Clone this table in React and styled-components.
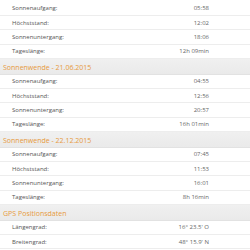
import React from 'react';
import styled, { createGlobalStyle } from 'styled-components';

const Global = createGlobalStyle`
  html, body {
    margin: 0;
    padding: 0;
    background: #ffffff;
    overflow: hidden;
  }
  body {
    font-family: "Open Sans", "Liberation Sans", sans-serif;
  }
`;

const Page = styled.div`
  width: 250px;
  height: 250px;
  overflow: hidden;
  background: #fff;
  padding-top: 1.5px;
  box-sizing: border-box;
`;

const Header = styled.div`
  height: 15.5px;
  display: flex;
  align-items: center;
  padding: 3px 0 0 3px;
  box-sizing: border-box;
  font-size: 7px;
  color: #e79a3c;
  background: linear-gradient(180deg, #f0f0f0 0%, #eaeaea 100%);
  border-bottom: 1px solid #e2e2e2;
`;

const Row = styled.div`
  height: 13.4px;
  display: grid;
  grid-template-columns: 1fr auto;
  align-items: center;
  padding: 0 41px 0 12px;
  border-bottom: 1px solid #ededed;
  font-size: 6px;
  color: #555;
`;

const Value = styled.span`
  text-align: right;
  color: #666;
`;

const sections = [
  {
    title: 'Tagundnachtgleiche',
    rows: [
      ['Sonnenaufgang:', '05:58'],
      ['Höchststand:', '12:02'],
      ['Sonnenuntergang:', '18:06'],
      ['Tageslänge:', '12h 09min'],
    ],
  },
  {
    title: 'Sonnenwende - 21.06.2015',
    rows: [
      ['Sonnenaufgang:', '04:55'],
      ['Höchststand:', '12:56'],
      ['Sonnenuntergang:', '20:57'],
      ['Tageslänge:', '16h 01min'],
    ],
  },
  {
    title: 'Sonnenwende - 22.12.2015',
    rows: [
      ['Sonnenaufgang:', '07:45'],
      ['Höchststand:', '11:53'],
      ['Sonnenuntergang:', '16:01'],
      ['Tageslänge:', '8h 16min'],
    ],
  },
  {
    title: 'GPS Positionsdaten',
    rows: [
      ['Längengrad:', "16° 23.5'  O"],
      ['Breitengrad:', "48° 15.9'  N"],
    ],
  },
];

export default function App() {
  return (
    <Page>
      <Global />
      {sections.map((s, i) => (
        <div key={i}>
          {i > 0 && <Header>{s.title}</Header>}
          {s.rows.map(([label, value]) => (
            <Row key={label}>
              <span>{label}</span>
              <Value>{value}</Value>
            </Row>
          ))}
        </div>
      ))}
    </Page>
  );
}
